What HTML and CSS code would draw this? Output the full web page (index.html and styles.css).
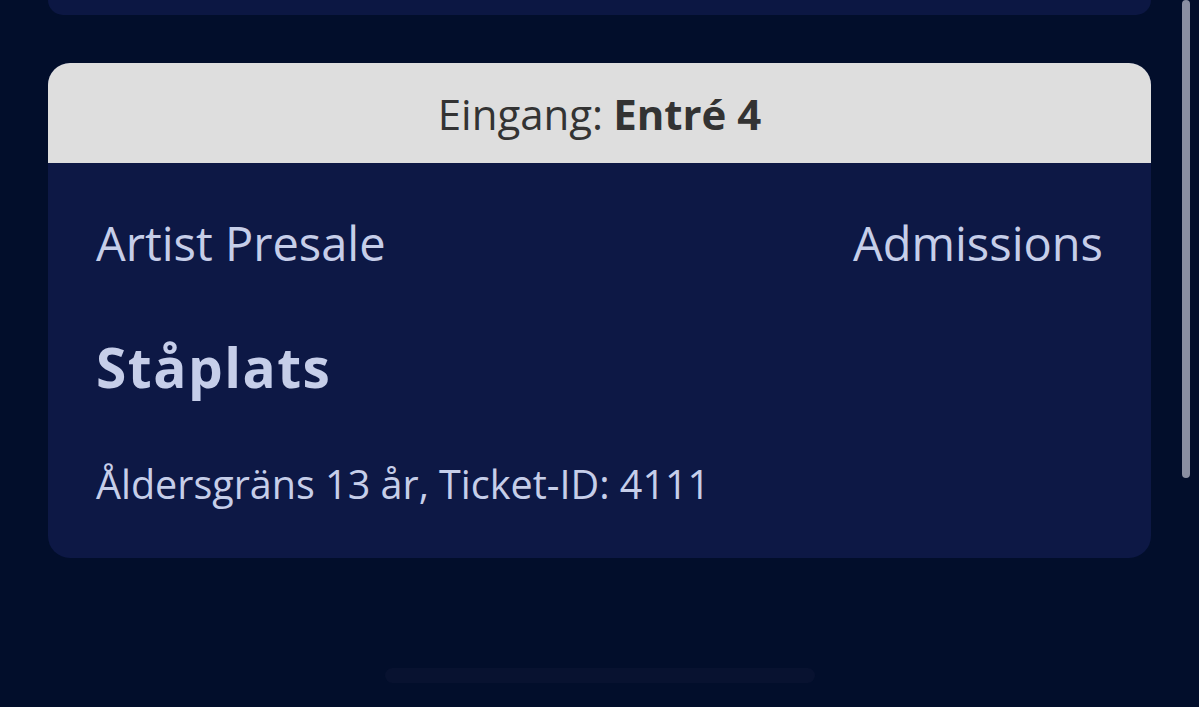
FILE: index.html
```html
<!DOCTYPE html>
<html lang="sv">
<head>
<meta charset="utf-8">
<link rel="stylesheet" href="styles.css">
</head>
<body>
<div class="page">
  <div class="prev-card"></div>
  <div class="ticket">
    <div class="ticket-head">Eingang: <strong>Entré 4</strong></div>
    <div class="ticket-body">
      <div class="row">
        <span class="label">Artist Presale</span>
        <span class="label">Admissions</span>
      </div>
      <div class="title">Ståplats</div>
      <div class="meta">Åldersgräns 13 år, Ticket-ID: 4111</div>
    </div>
  </div>
</div>
<div class="scrollbar"></div>
<div class="home-indicator"></div>
</body>
</html>
```

FILE: styles.css
```css
html, body {
  margin: 0;
  padding: 0;
  background: #020e2b;
  height: 100%;
  overflow: hidden;
}
body {
  font-family: "Open Sans", "Noto Sans", sans-serif;
  position: relative;
}
.page {
  padding: 0 48px;
  display: flex;
  flex-direction: column;
}
.prev-card {
  height: 15px;
  background: #0c1743;
  border-radius: 0 0 20px 20px;
}
.ticket {
  margin-top: 48px;
  border-radius: 22px;
  overflow: hidden;
  background: #0d1845;
}
.ticket-head {
  height: 100px;
  background: #dedede;
  color: #333333;
  display: flex;
  align-items: center;
  justify-content: center;
  font-size: 42px;
  box-sizing: border-box;
}
.ticket-head strong {
  font-weight: 700;
  margin-left: 10px;
}
.ticket-body {
  padding: 52px 48px 49px;
  color: #c6cee9;
  display: flex;
  flex-direction: column;
}
.row {
  display: flex;
  justify-content: space-between;
  font-size: 47px;
  line-height: 56px;
}
.title {
  margin-top: 68px;
  font-size: 55px;
  font-weight: 700;
  letter-spacing: 1.5px;
  line-height: 56px;
}
.meta {
  margin-top: 64px;
  font-size: 39.5px;
  line-height: 50px;
}
.scrollbar {
  position: absolute;
  top: 0;
  left: 1182px;
  width: 8px;
  height: 478px;
  background: #8a8fa2;
  border-radius: 4px;
}
.home-indicator {
  position: absolute;
  top: 668px;
  left: 385px;
  width: 430px;
  height: 15px;
  border-radius: 8px;
  background: #081230;
}
```
